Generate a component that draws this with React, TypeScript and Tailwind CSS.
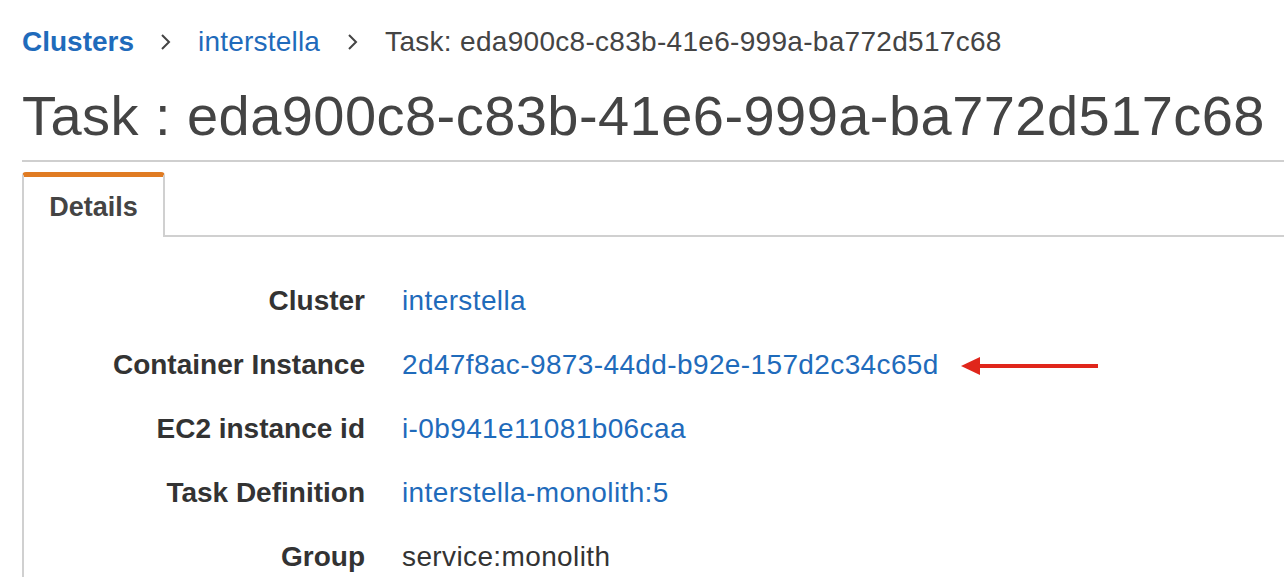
export default function App() {
  const rows: { label: string; value: string; link: boolean; arrow?: boolean }[] = [
    { label: "Cluster", value: "interstella", link: true },
    { label: "Container Instance", value: "2d47f8ac-9873-44dd-b92e-157d2c34c65d", link: true, arrow: true },
    { label: "EC2 instance id", value: "i-0b941e11081b06caa", link: true },
    { label: "Task Definition", value: "interstella-monolith:5", link: true },
    { label: "Group", value: "service:monolith", link: false },
  ];

  return (
    <div
      className="w-[1284px] h-[588px] overflow-hidden bg-white pl-[22px] text-[#444]"
      style={{ fontFamily: '"Liberation Sans", Arial, sans-serif' }}
    >
      <nav className="flex items-center pt-[22px] h-[62px] text-[28px] leading-[40px]">
        <a className="font-bold text-[#1f6bbb]">Clusters</a>
        <span className="mx-[26px] text-[#444]">
          <svg width="12" height="18" viewBox="0 0 12 18" fill="none">
            <path d="M2 2l7 7-7 7" stroke="#444" strokeWidth="2" />
          </svg>
        </span>
        <a className="text-[#1f6bbb] tracking-[0.2px]">interstella</a>
        <span className="mx-[26px] ml-[27px]">
          <svg width="12" height="18" viewBox="0 0 12 18" fill="none">
            <path d="M2 2l7 7-7 7" stroke="#444" strokeWidth="2" />
          </svg>
        </span>
        <span className="tracking-[0.3px]">Task: eda900c8-c83b-41e6-999a-ba772d517c68</span>
      </nav>

      <h1 className="text-[56px] leading-[66px] mt-[21px] tracking-[0.45px]">
        Task : eda900c8-c83b-41e6-999a-ba772d517c68
      </h1>
      <div className="h-[2px] bg-[#cfcfcf] mt-[11px]" />

      <div className="flex mt-[10px]">
        <div className="w-[143px] h-[65px] rounded-t-[4px] border-x-2 border-[#d0d0d0] border-t-[5px] border-t-[#e07b22] flex items-center justify-center text-[27px] font-bold bg-white">
          Details
        </div>
        <div className="flex-1 border-b-2 border-[#d0d0d0]" />
      </div>

      <div className="border-l-2 border-[#d0d0d0] pt-[44px] flex flex-col gap-[24px] text-[28px] leading-[40px]">
        {rows.map((r) => (
          <div key={r.label} className="flex items-center">
            <div className="w-[341px] text-right font-bold text-[#333]">{r.label}</div>
            <div className={`ml-[37px] tracking-[0.38px] ${r.link ? "text-[#1f6bbb]" : "text-[#333]"}`}>{r.value}</div>
            {r.arrow && (
              <svg className="ml-[22px] mt-[2px]" width="140" height="20" viewBox="0 0 140 20">
                <polygon points="0,10 19,1 19,19" fill="#e0261b" />
                <rect x="17" y="8" width="120" height="4" fill="#e0261b" />
              </svg>
            )}
          </div>
        ))}
      </div>
    </div>
  );
}
